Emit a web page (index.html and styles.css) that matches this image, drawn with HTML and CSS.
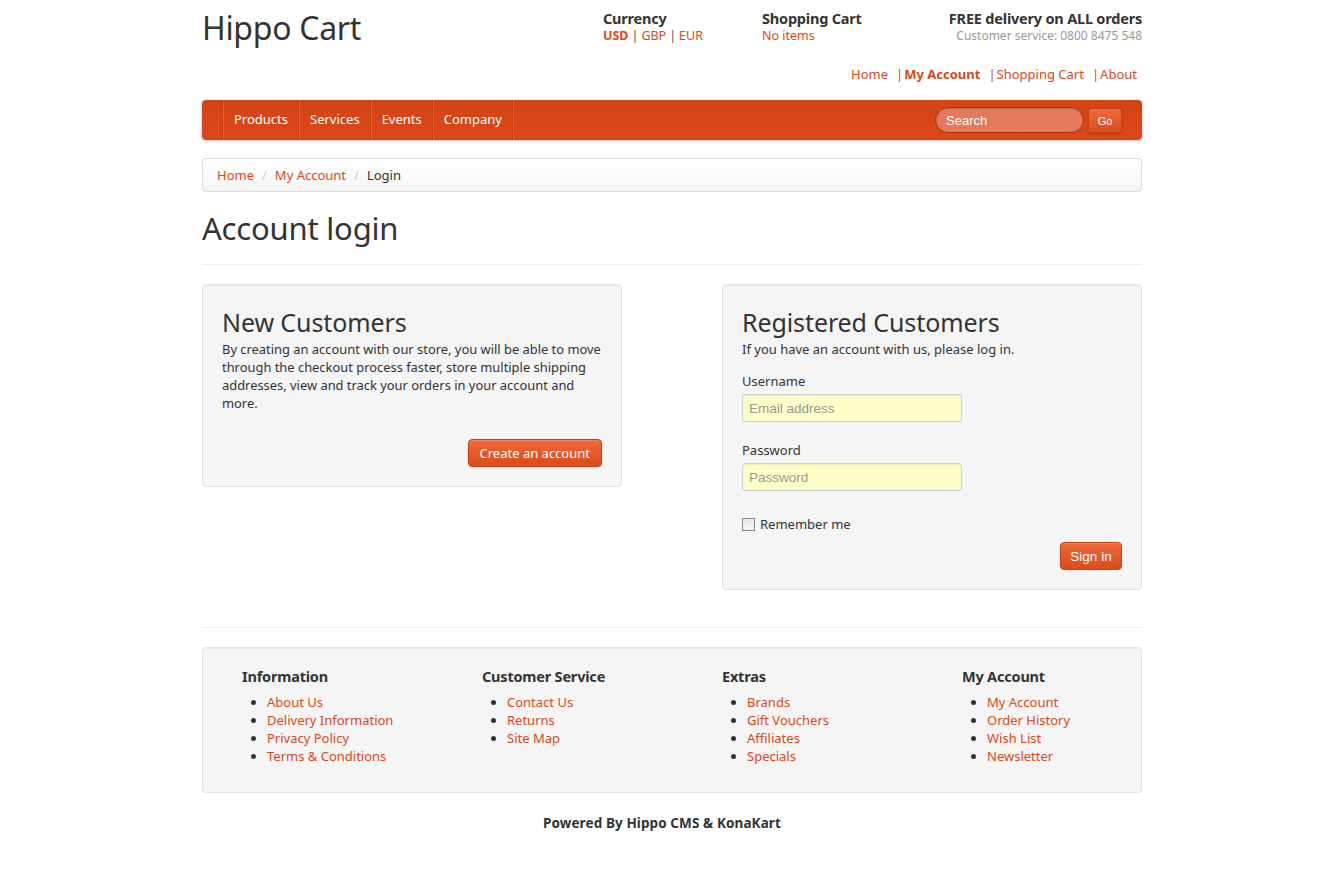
FILE: index.html
```html
<!DOCTYPE html>
<html lang="en">
<head>
<meta charset="utf-8">
<title>Hippo Cart - Account login</title>
<link rel="stylesheet" href="styles.css">
</head>
<body>
<div class="wrap">
  <header class="top">
    <div class="brand">Hippo Cart</div>
    <div class="top-info">
      <div class="info-block currency">
        <div class="info-title">Currency</div>
        <div class="info-sub"><a class="cur-active" href="#">USD</a><span class="pipe">|</span><a href="#">GBP</a><span class="pipe">|</span><a href="#">EUR</a></div>
      </div>
      <div class="info-block cart">
        <div class="info-title">Shopping Cart</div>
        <div class="info-sub"><a href="#">No items</a></div>
      </div>
      <div class="info-block delivery">
        <div class="info-title">FREE delivery on ALL orders</div>
        <div class="info-grey">Customer service: 0800 8475 548</div>
      </div>
    </div>
  </header>
  <nav class="toplinks">
    <a href="#">Home</a><span class="sep">|</span><a class="strong" href="#">My Account</a><span class="sep">|</span><a href="#">Shopping Cart</a><span class="sep">|</span><a href="#">About</a>
  </nav>
  <div class="navbar">
    <ul class="menu">
      <li><a href="#">Products</a></li>
      <li><a href="#">Services</a></li>
      <li><a href="#">Events</a></li>
      <li><a href="#">Company</a></li>
    </ul>
    <form class="search">
      <input class="search-input" type="text" placeholder="Search">
      <button class="go" type="button">Go</button>
    </form>
  </div>
  <ul class="breadcrumb">
    <li><a href="#">Home</a><span class="div">/</span></li>
    <li><a href="#">My Account</a><span class="div">/</span></li>
    <li class="current">Login</li>
  </ul>
  <h1 class="page-title">Account login</h1>
  <hr class="rule">
  <div class="columns">
    <div class="well new">
      <h2>New Customers</h2>
      <p>By creating an account with our store, you will be able to move through the checkout process faster, store multiple shipping addresses, view and track your orders in your account and more.</p>
      <div class="actions"><button class="btn" type="button">Create an account</button></div>
    </div>
    <div class="well reg">
      <h2>Registered Customers</h2>
      <p>If you have an account with us, please log in.</p>
      <label class="lbl">Username</label>
      <input class="field" type="text" placeholder="Email address">
      <label class="lbl pw">Password</label>
      <input class="field" type="password" placeholder="Password">
      <label class="check"><span class="box"></span>Remember me</label>
      <div class="actions"><button class="btn btn-sign" type="button">Sign in</button></div>
    </div>
  </div>
  <hr class="rule rule2">
  <footer class="footer well">
    <div class="fcol">
      <h3>Information</h3>
      <ul>
        <li><a href="#">About Us</a></li>
        <li><a href="#">Delivery Information</a></li>
        <li><a href="#">Privacy Policy</a></li>
        <li><a href="#">Terms &amp; Conditions</a></li>
      </ul>
    </div>
    <div class="fcol">
      <h3>Customer Service</h3>
      <ul>
        <li><a href="#">Contact Us</a></li>
        <li><a href="#">Returns</a></li>
        <li><a href="#">Site Map</a></li>
      </ul>
    </div>
    <div class="fcol">
      <h3>Extras</h3>
      <ul>
        <li><a href="#">Brands</a></li>
        <li><a href="#">Gift Vouchers</a></li>
        <li><a href="#">Affiliates</a></li>
        <li><a href="#">Specials</a></li>
      </ul>
    </div>
    <div class="fcol">
      <h3>My Account</h3>
      <ul>
        <li><a href="#">My Account</a></li>
        <li><a href="#">Order History</a></li>
        <li><a href="#">Wish List</a></li>
        <li><a href="#">Newsletter</a></li>
      </ul>
    </div>
  </footer>
  <div class="powered">Powered By Hippo CMS &amp; KonaKart</div>
</div>
</body>
</html>
```
FILE: styles.css
```css
* { box-sizing: border-box; }
html, body { margin: 0; padding: 0; background: #fff; }
body {
  font-family: "Noto Sans", "Open Sans", sans-serif;
  font-size: 13px;
  line-height: 18px;
  color: #333;
}
a { color: #dd4814; text-decoration: none; }
.wrap { width: 945px; margin: 0 auto; padding-left: 5px; }

.top { display: flex; justify-content: space-between; align-items: flex-start; padding-top: 9px; height: 60px; }
.brand { font-size: 32px; line-height: 40px; color: #333; letter-spacing: -0.3px; margin-top: -1px; }
.top-info { display: flex; width: 539px; }
.info-block { line-height: 18px; }
.info-title { font-weight: bold; font-size: 14.5px; letter-spacing: -0.2px; color: #333; line-height: 18px; }
.info-sub { font-size: 12.5px; line-height: 18px; }
.info-sub .pipe { color: #555; margin: 0 3px; }
.cur-active { font-weight: bold; }
.currency { width: 159px; }
.cart { width: 180px; }
.delivery { flex: 1; text-align: right; }
.info-grey { color: #999; font-size: 12px; line-height: 18px; }

.toplinks { text-align: right; padding-right: 5px; font-size: 13px; line-height: 18px; color: #dd4814; height: 40px; padding-top: 5px; }
.toplinks .sep { margin: 0 1px 0 8px; }
.toplinks a.strong { font-weight: bold; }

.navbar {
  height: 40px;
  background: linear-gradient(#d44413, #d9481a);
  border-radius: 4px;
  box-shadow: 0 1px 3px rgba(0,0,0,0.25);
  display: flex;
  justify-content: space-between;
  align-items: center;
  padding-left: 20px;
  padding-right: 20px;
}
.menu { list-style: none; margin: 0; padding: 0; display: flex; height: 40px; border-left: 1px solid #c03a0e; box-shadow: inset 1px 0 0 #e5623a; }
.menu li { border-right: 1px solid #c03a0e; box-shadow: 1px 0 0 #e5623a; }
.menu a { display: block; color: #fff; line-height: 39px; padding: 0 10px 0 11px; font-size: 13px; }
.search { display: flex; align-items: center; gap: 4px; }
.search-input {
  width: 149px; height: 26px; border-radius: 14px;
  border: 1px solid #a8330b;
  background: #e27a5b;
  font-family: "Liberation Sans", Arial, sans-serif;
  font-size: 13px; color: #fff; padding: 0 10px;
  box-shadow: inset 0 1px 2px rgba(0,0,0,0.15);
  outline: none;
}
.search-input::placeholder { color: #fff; opacity: 1; }
.go {
  width: 34px; height: 25px; margin-top: 1px;
  border: 1px solid #c9400f; border-radius: 3px;
  background: linear-gradient(#ec6a3e, #db4e1d);
  color: #fff; font-family: "Liberation Sans", Arial, sans-serif; font-size: 11px;
  box-shadow: 0 1px 2px rgba(0,0,0,0.2);
}

.breadcrumb {
  list-style: none; margin: 18px 0 0; padding: 7px 14px;
  height: 34px;
  border: 1px solid #ddd; border-radius: 4px;
  background: linear-gradient(#fff, #f5f5f5);
  box-shadow: inset 0 1px 0 #fff;
  display: flex; font-size: 13px;
}
.breadcrumb .div { color: #ccc; padding: 0 8px; }
.breadcrumb .current { color: #333; }

.page-title { font-size: 31px; font-weight: normal; margin: 0; line-height: 36px; padding-top: 18px; letter-spacing: -0.2px; }
.rule { border: 0; border-top: 1px solid #eee; margin: 18px 0 19px; }
.rule2 { margin: 37px 0 19px; }

.columns { display: flex; justify-content: space-between; align-items: flex-start; }
.well {
  background: #f5f5f5; border: 1px solid #e3e3e3; border-radius: 4px;
  box-shadow: inset 0 1px 1px rgba(0,0,0,0.05);
  padding: 19px;
}
.columns .well { width: 420px; }
.well h2 { font-size: 25px; font-weight: normal; line-height: 36px; margin: 0; letter-spacing: -0.1px; }
.well p { margin: 0; font-size: 13px; }
.new p { margin-bottom: 27px; font-size: 12.9px; }
.actions { display: flex; justify-content: flex-end; }
.btn {
  height: 28px; padding: 0 11px;
  border: 1px solid #c8400f; border-radius: 4px;
  background: linear-gradient(#ec6a3e, #dc4a17);
  color: #fff; font-family: "Noto Sans", "Open Sans", sans-serif; font-size: 13px;
  box-shadow: inset 0 1px 0 rgba(255,255,255,0.2), 0 1px 2px rgba(0,0,0,0.05);
}
.btn-sign { font-family: "Liberation Sans", Arial, sans-serif; font-size: 13.5px; width: 62px; padding: 0; }

.lbl { display: block; margin-top: 14px; font-size: 13px; line-height: 18px; }
.lbl.pw { margin-top: 19px; }
.field {
  display: block; width: 220px; height: 28px; margin-top: 4px;
  border: 1px solid #ccc; border-radius: 3px;
  background: #fffdc8;
  font-family: "Liberation Sans", Arial, sans-serif; font-size: 13.5px;
  padding: 0 6px; color: #555;
  box-shadow: inset 0 1px 1px rgba(0,0,0,0.075);
}
.field::placeholder { color: #999; }
.check { display: flex; align-items: center; margin-top: 24px; font-size: 13px; line-height: 18px; margin-bottom: 9px; }
.check .box { width: 13px; height: 13px; border: 1px solid #888; background: linear-gradient(#e6e6e6, #fafafa); margin-right: 5px; box-shadow: inset 0 0 0 1px #eee; }
.reg { padding-bottom: 19px; }

.footer { display: grid; grid-template-columns: repeat(4, 220px); column-gap: 20px; padding: 18px 19px 27px 39px; }
.footer h3 { font-size: 14.5px; margin: 0; line-height: 20px; letter-spacing: -0.2px; }
.footer ul { margin: 7px 0 0; padding-left: 25px; font-size: 13px; }
.footer li { line-height: 18px; }
.footer li::marker { color: #333; }
.powered { text-align: center; font-weight: bold; font-size: 13.5px; padding-top: 21px; padding-right: 20px; letter-spacing: 0.1px; }
```
